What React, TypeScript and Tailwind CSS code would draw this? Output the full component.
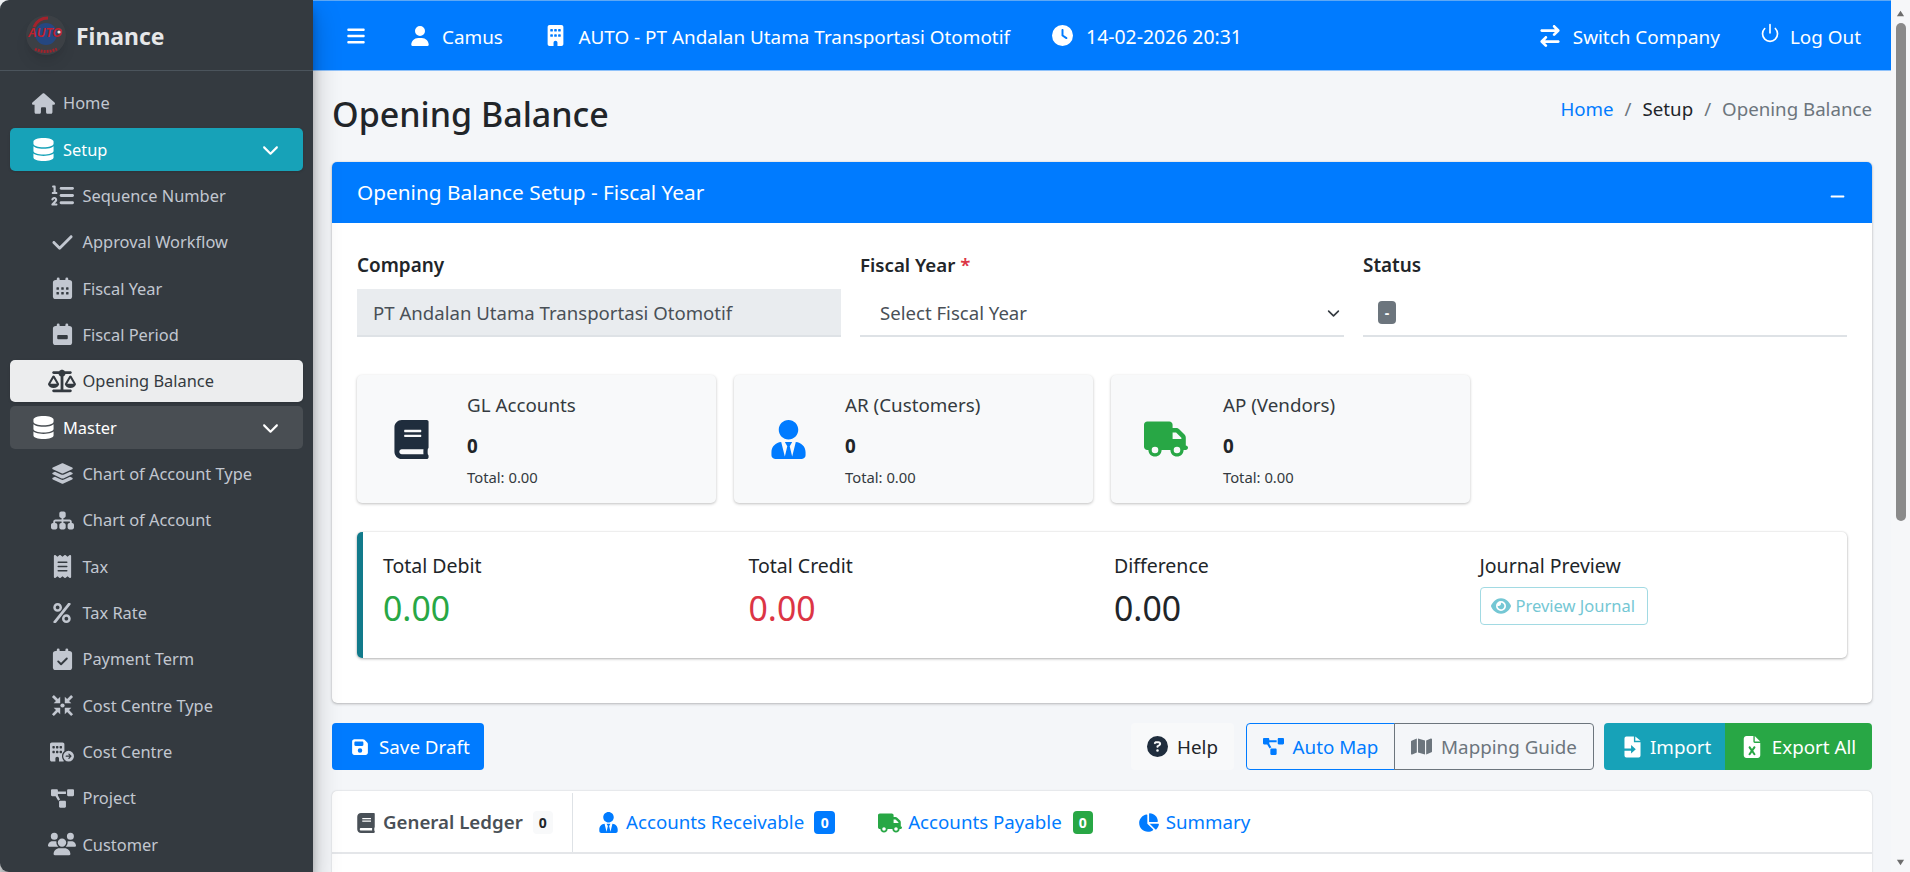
import type { ReactNode } from "react"
import {
  FaArrowRightArrowLeft,
  FaBars,
  FaBuilding,
  FaBuildingCircleArrowRight,
  FaChartPie,
  FaCheck,
  FaChevronDown,
  FaCircleQuestion,
  FaClock,
  FaDatabase,
  FaEye,
  FaFileExcel,
  FaFloppyDisk,
  FaHouse,
  FaLayerGroup,
  FaListOl,
  FaMap,
  FaMinus,
  FaReceipt,
  FaScaleBalanced,
  FaSitemap,
  FaTruck,
  FaUser,
  FaUsers,
} from "react-icons/fa6"
import { FaBook, FaPercent, FaProjectDiagram, FaUserTie } from "react-icons/fa"
import { Power } from "lucide-react"

// rounded calendar with a punched-out centre, used by three of the menu items
function CalendarIcon({ children }: { children: ReactNode }) {
  return (
    <svg viewBox="0 0 22 24" className="size-[23px]">
      <rect x="1" y="3" width="20" height="20" rx="3" fill="currentColor" />
      <rect x="5" y="0.5" width="3" height="6" rx="1.5" fill="currentColor" />
      <rect x="14" y="0.5" width="3" height="6" rx="1.5" fill="currentColor" />
      {children}
    </svg>
  )
}

// four diagonal arrows closing on a dot
function ArrowsInIcon() {
  return (
    <svg viewBox="0 0 24 24" className="size-[23px]" fill="currentColor">
      <circle cx="12" cy="12" r="2.2" />
      {[0, 90, 180, 270].map((deg) => (
        <g key={deg} transform={`rotate(${deg} 12 12)`}>
          <path d="M9.6 9.6V2.8L7.2 5.2 3 1 1 3l4.2 4.2-2.4 2.4z" />
        </g>
      ))}
    </svg>
  )
}

const hole = "#343a40"

const setupItems = [
  { label: "Sequence Number", icon: <FaListOl className="size-[23px]" /> },
  { label: "Approval Workflow", icon: <FaCheck className="size-[23px]" /> },
  {
    label: "Fiscal Year",
    icon: (
      <CalendarIcon>
        {[6, 11, 16].map((x) =>
          [12, 17].map((y) => <rect key={`${x}-${y}`} x={x - 1.3} y={y - 1.3} width="2.6" height="2.6" rx="0.6" fill={hole} />),
        )}
      </CalendarIcon>
    ),
  },
  {
    label: "Fiscal Period",
    icon: (
      <CalendarIcon>
        <rect x="5.5" y="12.5" width="11" height="4.5" rx="1" fill={hole} />
      </CalendarIcon>
    ),
  },
]

const masterItems = [
  { label: "Chart of Account Type", icon: <FaLayerGroup className="size-[23px]" /> },
  { label: "Chart of Account", icon: <FaSitemap className="size-[23px]" /> },
  { label: "Tax", icon: <FaReceipt className="size-[23px]" /> },
  { label: "Tax Rate", icon: <FaPercent className="size-[20px]" /> },
  {
    label: "Payment Term",
    icon: (
      <CalendarIcon>
        <path d="M6.5 14l3 3 6-6" fill="none" stroke={hole} strokeWidth="2" strokeLinecap="round" strokeLinejoin="round" />
      </CalendarIcon>
    ),
  },
  { label: "Cost Centre Type", icon: <ArrowsInIcon /> },
  { label: "Cost Centre", icon: <FaBuildingCircleArrowRight className="size-[24px]" /> },
  { label: "Project", icon: <FaProjectDiagram className="size-[23px]" /> },
  { label: "Customer", icon: <FaUsers className="size-[28px]" /> },
]

function SubItem({ label, icon, active }: { label: string; icon: ReactNode; active?: boolean }) {
  return (
    <div
      className={`flex h-[42.4px] items-center rounded-[5px] pl-[36px] text-[16.4px] ${
        active ? "bg-[#ecedee] text-[#343a40] shadow-sm" : "text-[#c2c7d0]"
      }`}
    >
      <span className="flex w-[32px] justify-center">{icon}</span>
      <span className="ml-[4.5px] pt-[1px]">{label}</span>
    </div>
  )
}

function GroupItem({ label, tone }: { label: string; tone: string }) {
  return (
    <div className={`flex h-[42.4px] items-center rounded-[5px] pl-[22px] pr-[24px] text-[16.4px] text-white ${tone}`}>
      <span className="flex w-[23px] justify-center">
        <FaDatabase className="size-[23px]" />
      </span>
      <span className="ml-[8px] flex-1 pt-[1px]">{label}</span>
      <FaChevronDown className="size-[17px]" />
    </div>
  )
}

function Logo() {
  return (
    <svg viewBox="0 0 40 40" className="size-[40px] rounded-full shadow-lg">
      <circle cx="20" cy="20" r="20" fill="#3c4045" />
      <circle cx="20" cy="19" r="11" fill="#1d4a96" opacity="0.75" />
      <path d="M8 12 Q12 3 22 3" fill="none" stroke="#a3222c" strokeWidth="3" />
      <text x="19" y="22" textAnchor="middle" fontSize="12" fontWeight="700" fontStyle="italic" fill="#c0202e" fontFamily="Liberation Sans, sans-serif">
        AUTO
      </text>
      <circle cx="33" cy="17" r="1.6" fill="#e8e8e8" />
      <path d="M9 34 Q20 39 31 34" fill="none" stroke="#a3222c" strokeWidth="3" strokeDasharray="2 1" />
    </svg>
  )
}

function Sidebar() {
  return (
    <aside className="relative z-10 flex h-full w-[313px] shrink-0 flex-col overflow-hidden rounded-l-[9px] bg-[#343a40] shadow-[0_14px_28px_rgba(0,0,0,0.25),0_10px_10px_rgba(0,0,0,0.22)]">
      <div className="flex h-[71px] shrink-0 items-center border-b border-[#4b545c] pl-[26px]">
        <Logo />
        <span className="ml-[10px] pt-[5px] text-[22.9px] font-bold text-[#e6e7e9]">Finance</span>
      </div>
      <nav className="flex flex-col gap-[3.95px] px-[10px] pt-[11px]">
        <div className="flex h-[42.4px] items-center pl-[22px] text-[16.4px] text-[#c2c7d0]">
          <span className="flex w-[23px] justify-center">
            <FaHouse className="size-[23px]" />
          </span>
          <span className="ml-[8px] pt-[1px]">Home</span>
        </div>
        <GroupItem label="Setup" tone="bg-[#17a2b8] shadow-sm" />
        {setupItems.map((item) => (
          <SubItem key={item.label} {...item} />
        ))}
        <SubItem label="Opening Balance" icon={<FaScaleBalanced className="size-[28px]" />} active />
        <GroupItem label="Master" tone="bg-[#494e53]" />
        {masterItems.map((item) => (
          <SubItem key={item.label} {...item} />
        ))}
      </nav>
    </aside>
  )
}

function Topbar() {
  return (
    <header className="flex h-[71px] shrink-0 items-center border-b border-t border-b-[#8fc2fb] border-t-[#5ea8f5] bg-[#007bff] pl-[33px] pr-[30px] text-[18.9px] text-white">
      <FaBars className="size-[20px]" />
      <FaUser className="ml-[44px] size-[20px]" />
      <span className="ml-[12px] pt-[3px]">Camus</span>
      <FaBuilding className="ml-[42px] size-[21px]" />
      <span className="ml-[12.5px] pt-[3px]">AUTO - PT Andalan Utama Transportasi Otomotif</span>
      <FaClock className="ml-[42px] size-[21px]" />
      <span className="ml-[13px] pt-[3px] text-[19.4px]">14-02-2026 20:31</span>
      <FaArrowRightArrowLeft className="ml-auto size-[22px]" />
      <span className="ml-[12px] pt-[3px]">Switch Company</span>
      <Power className="mb-[5px] ml-[40px] size-[20px]" strokeWidth={2} />
      <span className="ml-[10px] pt-[3px]">Log Out</span>
    </header>
  )
}

function StatCard({ title, icon, offset }: { title: string; icon: ReactNode; offset: string }) {
  return (
    <div className="flex h-[128px] w-[358.6px] items-start rounded-[5px] bg-[#f8f9fa] shadow-[0_1px_3px_rgba(0,0,0,0.25)]">
      <div className={`flex h-full items-center justify-center pr-[1px] ${offset}`}>{icon}</div>
      <div className="flex flex-col pt-[17px]">
        <span className="text-[18.8px] leading-[26px] text-[#343a40]">{title}</span>
        <span className="mt-[15px] text-[18.8px] font-bold leading-[26px] text-[#212529]">0</span>
        <span className="mt-[6px] pt-[2px] text-[14.8px] leading-[20px] text-[#343a40]">Total: 0.00</span>
      </div>
    </div>
  )
}

function Total({ label, value, color }: { label: string; value: string; color: string }) {
  return (
    <div>
      <div className="text-[19.5px] leading-[26px] text-[#212529]">{label}</div>
      <div className={`mt-[7px] text-[33.8px] leading-[44px] ${color}`}>{value}</div>
    </div>
  )
}

function SetupCard() {
  return (
    <section className="flex h-[541px] flex-col overflow-hidden rounded-[5px] bg-white shadow-[0_0_1px_rgba(0,0,0,0.2),0_1px_3px_rgba(0,0,0,0.25)]">
      <div className="flex h-[61px] shrink-0 items-center justify-between bg-[#007bff] pl-[25px] pr-[26px] text-[20.8px] text-white">
        <span>Opening Balance Setup - Fiscal Year</span>
        <FaMinus className="mt-[8px] size-[17px]" />
      </div>
      <div className="px-[25px] pt-[29px]">
        <div className="grid grid-cols-3 gap-x-[19px]">
          <div>
            <label className="block text-[18.9px] font-semibold leading-[26px] text-[#212529]">Company</label>
            <div className="mt-[11px] flex h-[48px] items-center border-b-2 border-[#dee2e6] bg-[#e9ecef] pl-[16px] pt-[2px] text-[18.6px] text-[#495057]">
              PT Andalan Utama Transportasi Otomotif
            </div>
          </div>
          <div>
            <label className="block text-[18.7px] font-semibold leading-[26px] text-[#212529]">
              Fiscal Year <span className="text-[#dc3545]">*</span>
            </label>
            <div className="mt-[11px] flex h-[48px] items-center justify-between border-b-2 border-[#dee2e6] pl-[20px] pr-[4px] pt-[2px] text-[18.6px] text-[#495057]">
              <span>Select Fiscal Year</span>
              <svg viewBox="0 0 16 16" className="size-[13px]" fill="none" stroke="#343a40" strokeWidth="2" strokeLinecap="round" strokeLinejoin="round">
                <path d="M2 5l6 6 6-6" />
              </svg>
            </div>
          </div>
          <div>
            <label className="block text-[18.9px] font-semibold leading-[26px] text-[#212529]">Status</label>
            <div className="mt-[11px] flex h-[48px] items-center border-b-2 border-[#dee2e6] pl-[15px]">
              <span className="flex h-[23px] w-[18px] items-center justify-center rounded-[4px] bg-[#6c757d] text-[14px] font-bold text-white">
                -
              </span>
            </div>
          </div>
        </div>

        <div className="mt-[38px] flex gap-[18.4px]">
          <StatCard title="GL Accounts" offset="w-[110px]" icon={<FaBook className="size-[39px] text-[#1f2d3d]" />} />
          <StatCard title="AR (Customers)" offset="w-[111px]" icon={<FaUserTie className="size-[39px] text-[#007bff]" />} />
          <StatCard title="AP (Vendors)" offset="w-[112px]" icon={<FaTruck className="size-[44px] text-[#28a745]" />} />
        </div>

        <div className="mt-[29px] grid h-[126px] grid-cols-4 rounded-[5px] border-l-[6px] border-[#117a8b] pl-[20px] pr-[2px] pt-[21px] shadow-[0_0_2px_rgba(0,0,0,0.12),0_1px_3px_rgba(0,0,0,0.28)]">
          <Total label="Total Debit" value="0.00" color="text-[#28a745]" />
          <Total label="Total Credit" value="0.00" color="text-[#dc3545]" />
          <Total label="Difference" value="0.00" color="text-[#212529]" />
          <div>
            <div className="text-[19.5px] leading-[26px] text-[#212529]">Journal Preview</div>
            <button className="mt-[8px] flex h-[38px] w-[168px] items-center gap-[5px] rounded-[4px] border border-[#a2dae3] pl-[10px] text-[16.5px] text-[#74c7d4]">
              <FaEye className="size-[20px]" />
              Preview Journal
            </button>
          </div>
        </div>
      </div>
    </section>
  )
}

function ImportIcon() {
  return (
    <svg viewBox="0 0 18 23" className="h-[22px] w-[17px] shrink-0" fill="currentColor">
      <path
        fillRule="evenodd"
        d="M2.5 0.5H10.5V6.5H17.5V20.5A2 2 0 0 1 15.5 22.5H2.5A2 2 0 0 1 0.5 20.5V2.5A2 2 0 0 1 2.5 0.5ZM0.5 13V15.5H7.5V18.5L12.5 14L7.5 9.5V13Z"
      />
      <path d="M12 0.5L17.5 5H12Z" />
    </svg>
  )
}

function ActionRow() {
  return (
    <div className="mt-[20px] flex h-[47px] items-center text-[18.8px]">
      <button className="flex h-full w-[152px] items-center gap-[10px] rounded-[4px] bg-[#007bff] pl-[19px] pt-[2px] text-white">
        <FaFloppyDisk className="-mt-[2px] size-[18px]" />
        Save Draft
      </button>
      <button className="ml-auto flex h-full w-[103px] items-center justify-center gap-[9px] rounded-[4px] bg-[#f8f9fa] pt-[2px] text-[#212529]">
        <FaCircleQuestion className="-mt-[2px] size-[21px] text-[#1f2d3d]" />
        Help
      </button>
      <div className="ml-[12px] flex h-full">
        <button className="flex h-full w-[149px] items-center justify-center gap-[9px] rounded-l-[4px] border border-[#007bff] pt-[2px] text-[#007bff]">
          <FaProjectDiagram className="-mt-[2px] size-[21px]" />
          Auto Map
        </button>
        <button className="-ml-px flex h-full w-[200px] items-center justify-center gap-[9px] rounded-r-[4px] border border-[#6c757d] pt-[2px] text-[#6c757d]">
          <FaMap className="-mt-[2px] size-[21px]" />
          Mapping Guide
        </button>
      </div>
      <div className="ml-[10px] flex h-full text-white">
        <button className="flex h-full w-[121px] items-center gap-[9px] rounded-l-[4px] bg-[#17a2b8] pl-[20px] pt-[2px]">
          <span className="-mt-[2px]">
            <ImportIcon />
          </span>
          Import
        </button>
        <button className="flex h-full w-[147px] items-center justify-center gap-[9px] rounded-r-[4px] bg-[#28a745] pt-[2px]">
          <FaFileExcel className="-mt-[2px] size-[22px]" />
          Export All
        </button>
      </div>
    </div>
  )
}

function Tabs() {
  return (
    <section className="mt-[21px] h-[100px] rounded-t-[5px] bg-white shadow-[0_0_2px_rgba(0,0,0,0.2)]">
      <div className="flex h-[63px] items-stretch border-b-2 border-[#e4e6e9] pt-[2px] text-[18.7px]">
        <div className="flex w-[241px] items-center rounded-tl-[5px] border-r border-[#dee2e6] pl-[24px] font-semibold text-[#495057]">
          <FaBook className="size-[20px]" />
          <span className="ml-[7px]">General Ledger</span>
          <span className="ml-[10px] flex h-[23px] w-[20px] items-center justify-center rounded-[4px] bg-[#f8f9fa] text-[14px] font-bold text-[#212529]">0</span>
        </div>
        <div className="ml-[25px] flex items-center text-[#007bff]">
          <FaUserTie className="size-[21px]" />
          <span className="ml-[7px]">Accounts Receivable</span>
          <span className="ml-[10px] flex h-[23px] w-[21px] items-center justify-center rounded-[4px] bg-[#007bff] text-[14px] font-bold text-white">0</span>
        </div>
        <div className="ml-[43px] flex items-center text-[#007bff]">
          <FaTruck className="size-[24px] text-[#28a745]" />
          <span className="ml-[6px]">Accounts Payable</span>
          <span className="ml-[11px] flex h-[23px] w-[20px] items-center justify-center rounded-[4px] bg-[#28a745] text-[14px] font-bold text-white">0</span>
        </div>
        <div className="ml-[45px] flex items-center text-[#007bff]">
          <FaChartPie className="size-[21px]" />
          <span className="ml-[7px]">Summary</span>
        </div>
      </div>
    </section>
  )
}

function Scrollbar() {
  return (
    <div className="flex h-full w-[19px] shrink-0 flex-col items-center bg-[#f6f7f9]">
      <svg viewBox="0 0 10 8" className="mt-[9px] size-[9px] fill-[#6d6d6d]">
        <path d="M5 1l4 6H1z" />
      </svg>
      <div className="mt-[5px] h-[498px] w-[10px] rounded-full bg-[#8a8a8a]" />
      <svg viewBox="0 0 10 8" className="mt-auto mb-[5px] size-[9px] fill-[#6d6d6d]">
        <path d="M5 7L1 1h8z" />
      </svg>
    </div>
  )
}

export default function App() {
  return (
    <div className="flex h-screen w-full overflow-hidden bg-[#f4f6f9] font-['Noto_Sans',sans-serif]">
      <Sidebar />
      <main className="flex h-full min-w-0 flex-1 flex-col">
        <Topbar />
        <div className="pl-[19px] pr-[19px]">
          <div className="flex h-[91px] items-center justify-between pb-[7px]">
            <h1 className="pt-[3px] text-[34px] font-medium text-[#212529]">Opening Balance</h1>
            <div className="flex items-center pb-[7px] text-[18.7px]">
              <span className="text-[#007bff]">Home</span>
              <span className="px-[11px] text-[#6c757d]">/</span>
              <span className="text-[#212529]">Setup</span>
              <span className="px-[11px] text-[#6c757d]">/</span>
              <span className="text-[#6c757d]">Opening Balance</span>
            </div>
          </div>
          <SetupCard />
          <ActionRow />
          <Tabs />
        </div>
      </main>
      <Scrollbar />
    </div>
  )
}
